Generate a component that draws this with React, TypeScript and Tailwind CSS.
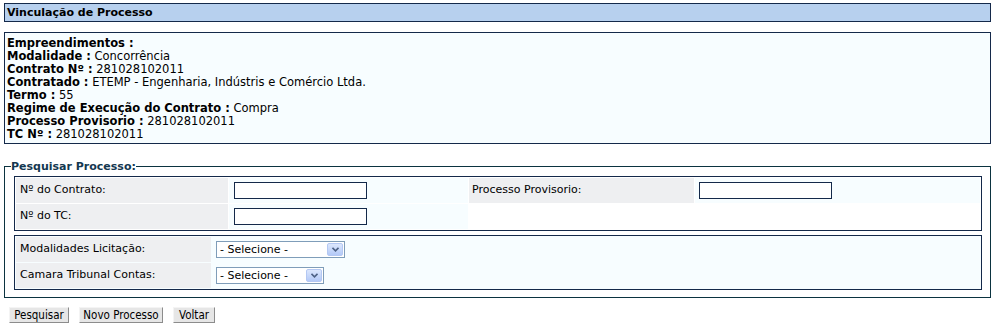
import type { FC } from 'react';

const info: { label: string; value: string }[] = [
  { label: 'Empreendimentos', value: '' },
  { label: 'Modalidade', value: 'Concorrência' },
  { label: 'Contrato Nº', value: '281028102011' },
  { label: 'Contratado', value: 'ETEMP - Engenharia, Indústris e Comércio Ltda.' },
  { label: 'Termo', value: '55' },
  { label: 'Regime de Execução do Contrato', value: 'Compra' },
  { label: 'Processo Provisorio', value: '281028102011' },
  { label: 'TC Nº', value: '281028102011' },
];

// old XP-ish dropdown, drawn by hand so it looks the same everywhere
const FakeSelect: FC<{ width: string }> = ({ width }) => (
  <div
    className={`flex h-[17px] items-center justify-between border border-[#7f9db9] bg-white pl-[3px] pr-[1px] ${width}`}
  >
    <span className="leading-none">- Selecione -</span>
    <span className="flex h-[13px] w-[16px] items-center justify-center rounded-[2px] border border-[#b4c8f3] bg-gradient-to-b from-[#dce7fd] to-[#b3c9f7]">
      <svg width="7" height="5" viewBox="0 0 7 5">
        <path d="M0.5 0.8 L3.5 3.8 L6.5 0.8" fill="none" stroke="#4d6185" strokeWidth="1.6" />
      </svg>
    </span>
  </div>
);

const TextInput: FC = () => (
  <input type="text" className="h-[17px] w-[133px] border border-[#14294a] bg-white outline-none" />
);

const App: FC = () => {
  return (
    <div
      className="min-h-[327px] w-full bg-white text-[11px] text-black"
      style={{ fontFamily: '"DejaVu Sans", Verdana, sans-serif' }}
    >
      {/* Title bar */}
      <div className="mx-[4px] pt-[3px]">
        <div className="h-[19px] border border-[#14294a] bg-[#b7d0ee] px-[2px] font-bold leading-[17px]">
          Vinculação de Processo
        </div>
      </div>

      {/* Contract summary */}
      <div className="mx-[4px] mt-[10px] h-[112px] border border-[#14294a] bg-[#f7fdff] px-[2px] pt-[4px] text-[11.5px] leading-[13px]">
        {info.map((row) => (
          <div key={row.label}>
            <span className="font-bold">{row.label} :</span> {row.value}
          </div>
        ))}
      </div>

      {/* Search */}
      <fieldset className="mx-[4px] mt-[16px] border border-[#0b3340] pb-[7px] pl-[9px] pr-[8px] pt-[3px]">
        <legend className="-ml-[3px] px-0 font-bold leading-[13px] text-[#143850]">Pesquisar Processo:</legend>

        <div className="grid grid-cols-[212px_239px_225px_1fr] gap-[1px] border border-[#14294a] bg-white p-[1px]">
          <div className="flex h-[25px] items-center bg-[#eeeff1] pl-[4px]">Nº do Contrato:</div>
          <div className="flex h-[25px] items-center bg-[#f7fdff] pl-[5px]">
            <TextInput />
          </div>
          <div className="flex h-[25px] items-center bg-[#eeeff1] pl-[3px]">Processo Provisorio:</div>
          <div className="flex h-[25px] items-center bg-[#f7fdff] pl-[4px]">
            <TextInput />
          </div>
          <div className="flex h-[25px] items-center bg-[#eeeff1] pl-[4px]">Nº do TC:</div>
          <div className="flex h-[25px] items-center bg-[#f7fdff] pl-[5px]">
            <TextInput />
          </div>
          <div className="col-span-2 h-[25px]" />
        </div>

        <div className="mt-[4px] grid grid-cols-[195px_1fr] gap-[1px] border border-[#14294a] bg-[#f7fdff] p-[1px]">
          <div className="flex h-[25px] items-center bg-[#eeeff1] pl-[4px]">Modalidades Licitação:</div>
          <div className="flex h-[25px] items-center pl-[4px]">
            <FakeSelect width="w-[129px]" />
          </div>
          <div className="flex h-[25px] items-center bg-[#eeeff1] pl-[4px]">Camara Tribunal Contas:</div>
          <div className="flex h-[25px] items-center pl-[4px]">
            <FakeSelect width="w-[108px]" />
          </div>
        </div>
      </fieldset>

      {/* Actions */}
      <div
        className="mt-[9px] flex gap-[10px] pl-[9px]"
        style={{ fontFamily: '"DejaVu Sans Condensed", Tahoma, sans-serif' }}
      >
        {['Pesquisar', 'Novo Processo', 'Voltar'].map((label, i) => (
          <button
            key={label}
            type="button"
            className={`h-[16px] border border-b-[#8c8c8c] border-l-[#f4f4f4] border-r-[#8c8c8c] border-t-[#f4f4f4] bg-[#e6e6e6] text-[11.5px] leading-[14px] ${
              i === 0 ? 'w-[60px]' : i === 1 ? 'w-[84px]' : 'w-[42px]'
            }`}
          >
            {label}
          </button>
        ))}
      </div>
    </div>
  );
};

export default App;
